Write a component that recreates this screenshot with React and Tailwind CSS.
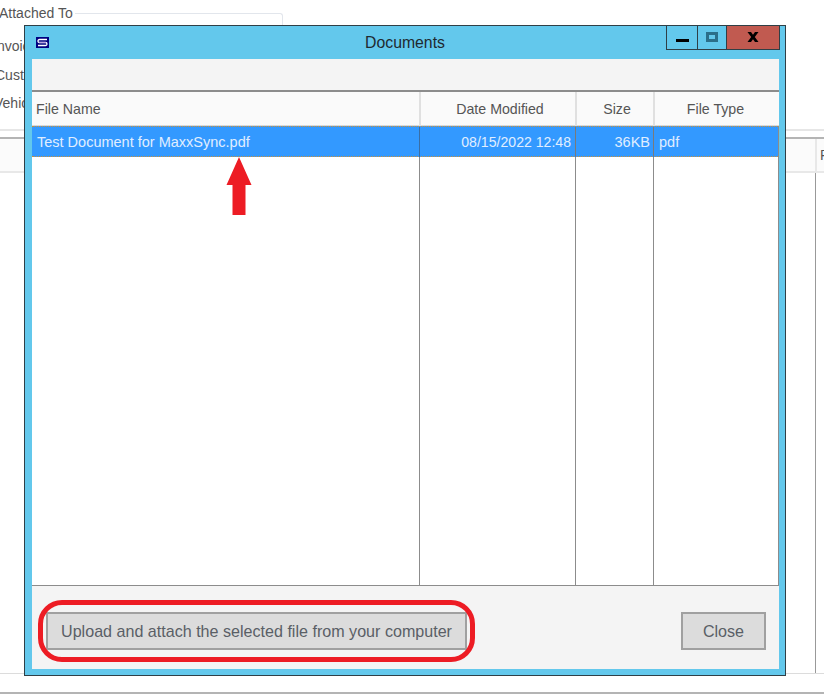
import React from "react";

const font = "font-['Liberation_Sans',Arial,sans-serif]";

function WindowButtons() {
  return (
    <div className="flex h-[24px] border border-t-0 border-[#2f3f46] mr-[5px]">
      <div className="w-[31px] flex items-center justify-center border-r border-[#2f3f46]">
        <div className="w-[13px] h-[3px] bg-black mt-[6px]" />
      </div>
      <div className="w-[29px] flex items-center justify-center border-r border-[#2f3f46]">
        <div className="w-[12px] h-[10px] border-[3px] border-[#2b6f8a] -mt-[1px]" />
      </div>
      <div className="w-[52px] flex items-center justify-center bg-[#c15a50] text-black">
        <svg width="12" height="10" viewBox="0 0 12 10" className="-mt-[1px]">
          <path d="M0.500 0h3.500l2 2.800 2-2.800h3.500L7.800 5l3.700 5H8L6 7.200 4 10H0.500l3.700-5z" fill="#000" />
        </svg>
      </div>
    </div>
  );
}

function AppIcon() {
  return (
    <svg width="13" height="11" viewBox="0 0 13 11">
      <rect width="13" height="11" fill="#000080" />
      <path d="M11 2.500H3.500Q2 2.500 2 4T3.500 5.500H9.500Q11 5.500 11 7T9.500 8.500H2" fill="none" stroke="#fff" strokeWidth="1.300" />
      <path d="M3 5.500H10" stroke="#b9a3e0" strokeWidth="1" />
    </svg>
  );
}

function UpArrow() {
  return (
    <svg width="26" height="58" viewBox="0 0 26 58" className="absolute left-[194px] top-0">
      <path d="M13 0 L25.500 28 H19.500 V58 H6.500 V28 H0.500 Z" fill="#ed1c24" />
    </svg>
  );
}

function Backdrop() {
  return (
    <div className="h-full flex flex-col text-[#555]">
      <div className="h-[131px] border-b-2 border-[#e6e6e6]">
        <div className="flex items-center h-[26px] text-[14px]">
          <span className="-ml-[1px] pr-[2px]">Attached To</span>
          <div className="w-[208px] h-[13px] mt-[13px] border-t border-r border-[#e2e6ec] rounded-tr-[3px]" />
        </div>
        <div className="flex flex-col gap-[10.500px] pt-[11px] text-[14px] leading-[18px]">
          <span className="-ml-[7px]">Invoice</span>
          <span className="-ml-[5px]">Customer</span>
          <span className="-ml-[6px]">Vehicle</span>
        </div>
      </div>
      <div className="mt-[6px] h-[36px] bg-[#fbfbfb] border-t-2 border-t-[#b4b4b4] border-b-2 border-b-[#e8e8e8] flex justify-end">
        <div className="w-[9px] border-l-2 border-[#e8e8e8] pl-[3px] text-[14px] leading-[32px] overflow-hidden">P</div>
      </div>
      <div className="h-[501px] border-b border-[#dcdcdc] flex justify-end">
        <div className="w-[9px] border-l border-[#999]" />
      </div>
      <div className="mt-[18px] h-[2px] bg-[#b4b4b4]" />
    </div>
  );
}

function Dialog() {
  return (
    <div className="absolute left-[24px] top-[25px] w-[762px] h-[651px] bg-[#63c8ec] border border-[#2f3f46] flex flex-col">
      <div className="h-[33px] shrink-0 relative flex items-start justify-end">
        <div className="absolute left-[11px] top-[11px] leading-[0]"><AppIcon /></div>
        <div className="absolute inset-x-0 top-[8px] text-center text-[15.800px] leading-[18px] text-[#1f2a30]">Documents</div>
        <WindowButtons />
      </div>
      <div className="ml-[7px] mr-[6px] flex-1 mb-[6px] flex flex-col bg-[#f4f4f4]">
        <div className="h-[33px] border-b-2 border-b-[#8c8c8c]" />
        <div className="grid grid-cols-[389px_156px_78px_124px] h-[34px] bg-[#fafafa] text-[14.200px] text-[#555] border-b border-[#d9d9d9]">
          <div className="border-r-2 border-[#e0e0e0] pl-[4px] leading-[35px]">File Name</div>
          <div className="border-r-2 border-[#e0e0e0] text-center pl-[4px] leading-[35px]">Date Modified</div>
          <div className="border-r-2 border-[#e0e0e0] text-center pl-[4px] leading-[35px]">Size</div>
          <div className="text-center pr-[3px] leading-[35px]">File Type</div>
        </div>
        <div className="h-[460px] bg-white border-b border-[#8c8c8c] border-r border-r-[#8c8c8c] flex flex-col">
          <div className="grid grid-cols-[388px_156px_78px_124px] h-[31px] bg-[#3399ff] text-[14.500px] text-[#e0eeff] border-y border-dotted border-[#c8903c]">
            <div className="border-r border-[#3a6ea5] pl-[5px] leading-[31px]">Test Document for MaxxSync.pdf</div>
            <div className="border-r border-[#7a7a7a] text-right pr-[4px] text-[14.100px] leading-[31px]">08/15/2022 12:48</div>
            <div className="border-r border-[#7a7a7a] text-right pr-[3px] leading-[31px]">36KB</div>
            <div className="pl-[5px] leading-[31px]">pdf</div>
          </div>
          <div className="grid grid-cols-[388px_156px_78px_124px] flex-1">
            <div className="border-r border-[#8c8c8c] relative"><UpArrow /></div>
            <div className="border-r border-[#8c8c8c]" />
            <div className="border-r border-[#8c8c8c]" />
            <div />
          </div>
        </div>
        <div className="flex-1 flex items-start justify-between pl-[14px] pr-[13px] pt-[26px]">
          <div className="relative">
            <button className="block w-[421px] h-[38px] bg-[#dcdcdc] border-2 border-[#a0a0a0] text-[16.100px] text-[#5a5f66]">
              Upload and attach the selected file from your computer
            </button>
            <div className="absolute -left-[8px] -top-[12px] w-[437px] h-[62px] border-[5px] border-[#ed1c24] rounded-[24px]" />
          </div>
          <button className="block w-[85px] h-[38px] bg-[#dcdcdc] border-2 border-[#a0a0a0] text-[16.100px] text-[#5a5f66]">Close</button>
        </div>
      </div>
    </div>
  );
}

export default function App() {
  return (
    <div className={`relative w-[824px] h-[695px] overflow-hidden bg-white ${font}`}>
      <Backdrop />
      <Dialog />
    </div>
  );
}
